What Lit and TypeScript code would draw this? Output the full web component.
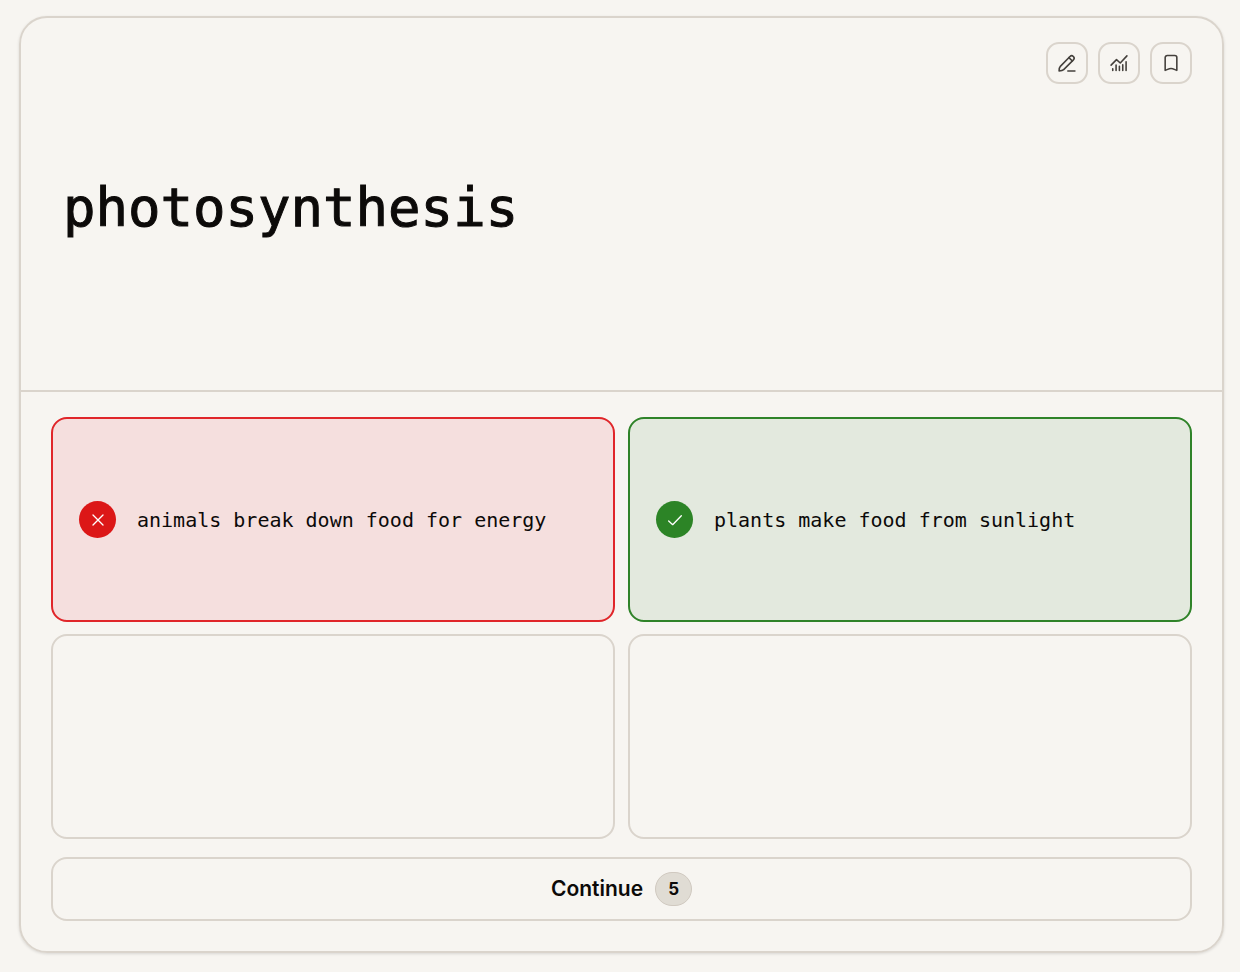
import { LitElement, html, css, svg, nothing } from "lit";
import { customElement, property } from "lit/decorators.js";

type Result = "wrong" | "right" | "empty";

const pencil = svg`<path d="M2.500 21.500c0-2.200.3-4.300 1.500-5.500L15.600 4.200a2.900 2.900 0 0 1 4.100 4.100L8 20c-1.200 1.200-3.300 1.500-5.500 1.500Z"/><path d="m14.300 5.500 4.100 4.100M13 21.500h8.500"/>`;
const chart = svg`<path d="M2.500 14.500 9 8l4.500 4L21.500 3.500"/><path d="M4.500 21v-2M8.500 21v-6.500M12.500 21v-5M16.500 21v-7M20.500 21V10.500"/>`;
const bookmark = svg`<path d="M5 5.500a2.500 2.500 0 0 1 2.500-2.500h9a2.500 2.500 0 0 1 2.500 2.500V20.800c-2-.6-4.500-2.300-7-2.300s-5 1.700-7 2.300Z"/>`;
const cross = svg`<path d="m4.500 4.500 15 15m0-15-15 15"/>`;
const check = svg`<path d="m2.500 13.500 6 5.500L21.500 5.500"/>`;

@customElement("answer-tile")
export class AnswerTile extends LitElement {
  @property() result: Result = "empty";
  @property() text = "";

  static styles = css`
    :host { display: grid; min-width: 0; }
    .tile {
      display: flex;
      align-items: center;
      gap: 21px;
      min-width: 0;
      padding: 0 26px;
      border: 2px solid #dad4cc;
      border-radius: 16px;
      background: transparent;
      color: #0c0a09;
      font: 20px/28px "DejaVu Sans Mono", monospace;
      text-align: left;
    }
    .wrong { background: #f5dfde; border-color: #e0262a; }
    .right { background: #e3e9de; border-color: #2f8329; }
    .mark {
      display: grid;
      place-items: center;
      flex: none;
      width: 37px;
      height: 37px;
      border-radius: 50%;
      background: #dc1717;
    }
    .right .mark { background: #2c8426; }
    svg {
      width: 16px;
      height: 16px;
      fill: none;
      stroke: #fff;
      stroke-width: 2;
      stroke-linecap: round;
      stroke-linejoin: round;
    }
  `;

  render() {
    return html`<button class="tile ${this.result}" ?disabled=${this.result === "empty"} aria-label=${this.text || "Eliminated answer"}>
      ${this.result === "empty"
        ? nothing
        : html`<span class="mark"><svg viewBox="0 0 24 24" aria-hidden="true">${this.result === "wrong" ? cross : check}</svg></span>
            <span>${this.text}</span>`}
    </button>`;
  }
}

@customElement("app-root")
export class AppRoot extends LitElement {
  static styles = css`
    :host {
      display: flex;
      box-sizing: border-box;
      min-height: 100vh;
      padding: 16px 16px 19px 19px;
      background: #f7f5f1;
      color: #0c0a09;
      font-family: Inter, sans-serif;
    }
    .card {
      display: grid;
      grid-template-rows: 2fr 3fr;
      flex: 1;
      min-width: 0;
      border: 2px solid #dad4cc;
      border-radius: 28px;
      box-shadow: 0 1px 3px #00000020;
    }
    .prompt {
      display: grid;
      grid-template-rows: auto 1fr;
      padding: 24px 30px 24px 42px;
      border-bottom: 2px solid #dad4cc;
      margin-bottom: -1px;
    }
    .tools { display: flex; justify-content: flex-end; gap: 10px; }
    .tool {
      display: grid;
      place-items: center;
      width: 42px;
      height: 42px;
      padding: 0;
      border: 2px solid #dad4cc;
      border-radius: 13px;
      background: transparent;
      color: #44403c;
    }
    .tool svg {
      width: 20px;
      height: 20px;
      fill: none;
      stroke: currentColor;
      stroke-width: 1.9;
      stroke-linecap: round;
      stroke-linejoin: round;
    }
    .term {
      align-self: center;
      margin: 0;
      padding-bottom: 34px;
      font: 54px/64px "DejaVu Sans Mono", monospace;
      -webkit-text-stroke: 1px currentColor;
    }
    .body {
      display: flex;
      flex-direction: column;
      gap: 18px;
      padding: 26px 30px 30px;
    }
    .answers {
      display: grid;
      grid-template-columns: 1fr 1fr;
      grid-auto-rows: 1fr;
      gap: 12px 13px;
      flex: 1;
    }
    .continue {
      display: flex;
      align-items: center;
      justify-content: center;
      gap: 12px;
      padding: 13px;
      border: 2px solid #dad4cc;
      border-radius: 16px;
      background: transparent;
      color: inherit;
      font: 600 21px/24px Inter, sans-serif;
    }
    .key {
      padding: 3px 12px;
      border: 1px solid #d0c9c0;
      border-radius: 17px;
      background: #e0dcd4;
      font: 700 17px/26px Inter, sans-serif;
    }
  `;

  render() {
    return html`<main class="card">
      <section class="prompt">
        <div class="tools">
          <button class="tool" aria-label="Edit"><svg viewBox="0 0 24 24">${pencil}</svg></button>
          <button class="tool" aria-label="Statistics"><svg viewBox="0 0 24 24">${chart}</svg></button>
          <button class="tool" aria-label="Bookmark"><svg viewBox="0 0 24 24">${bookmark}</svg></button>
        </div>
        <h1 class="term">photosynthesis</h1>
      </section>
      <section class="body">
        <div class="answers">
          <answer-tile result="wrong" text="animals break down food for energy"></answer-tile>
          <answer-tile result="right" text="plants make food from sunlight"></answer-tile>
          <answer-tile></answer-tile>
          <answer-tile></answer-tile>
        </div>
        <button class="continue">Continue <span class="key">5</span></button>
      </section>
    </main>`;
  }
}
